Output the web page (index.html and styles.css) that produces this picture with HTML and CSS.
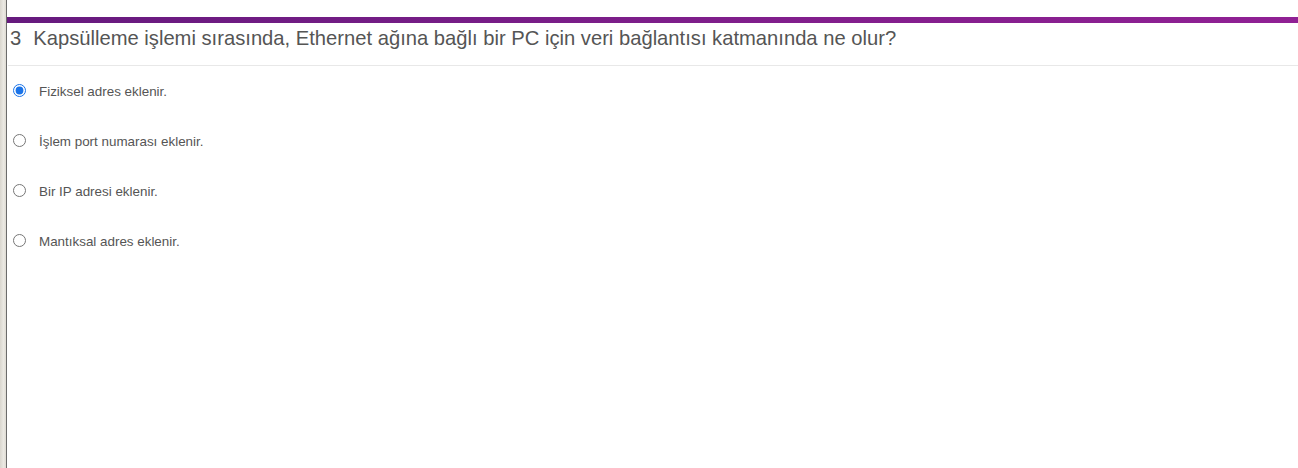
FILE: index.html
```html
<!DOCTYPE html>
<html lang="tr">
<head>
<meta charset="utf-8">
<title>Soru 3</title>
<link rel="stylesheet" href="styles.css">
</head>
<body>
<div class="frame">
  <div class="side"></div>
  <main class="main">
    <div class="accent"></div>
    <h1 class="question"><span class="num">3</span>Kapsülleme işlemi sırasında, Ethernet ağına bağlı bir PC için veri bağlantısı katmanında ne olur?</h1>
    <ul class="options">
      <li class="option"><label><input type="radio" name="q3" checked><span>Fiziksel adres eklenir.</span></label></li>
      <li class="option"><label><input type="radio" name="q3"><span>İşlem port numarası eklenir.</span></label></li>
      <li class="option"><label><input type="radio" name="q3"><span>Bir IP adresi eklenir.</span></label></li>
      <li class="option"><label><input type="radio" name="q3"><span>Mantıksal adres eklenir.</span></label></li>
    </ul>
  </main>
</div>
</body>
</html>
```
FILE: styles.css
```css
html, body {
  margin: 0;
  padding: 0;
  height: 100%;
  background: #fff;
}
body {
  font-family: "Liberation Sans", Arial, sans-serif;
  color: #555;
}
.frame {
  display: flex;
  min-height: 100%;
}
.side {
  width: 6px;
  flex: none;
  background: linear-gradient(to right, #d9d6ce, #ebe9e3 60%, #dedbd3);
  border-right: 1px solid #6b6b6b;
}
.main {
  flex: 1;
  padding-top: 17px;
}
.accent {
  height: 6px;
  background: linear-gradient(to right, #661a7e, #7d1e8a 50%, #902094);
}
.question {
  margin: 0 0 0 1px;
  padding: 1px 0 13px 2px;
  font-size: 20.2px;
  font-weight: normal;
  line-height: 28px;
  color: #555;
  border-bottom: 1px solid #e8e8e8;
}
.num {
  margin-right: 12px;
}
.options {
  list-style: none;
  margin: 0;
  padding: 18px 0 0 0;
}
.option {
  height: 50px;
  font-size: 13.4px;
}
.option label {
  display: flex;
  align-items: flex-start;
}
.option input {
  margin: 0 0 0 6px;
  width: 13px;
  height: 13px;
  accent-color: #1a73e8;
}
.option span {
  margin-left: 13px;
  line-height: 16px;
}
```
